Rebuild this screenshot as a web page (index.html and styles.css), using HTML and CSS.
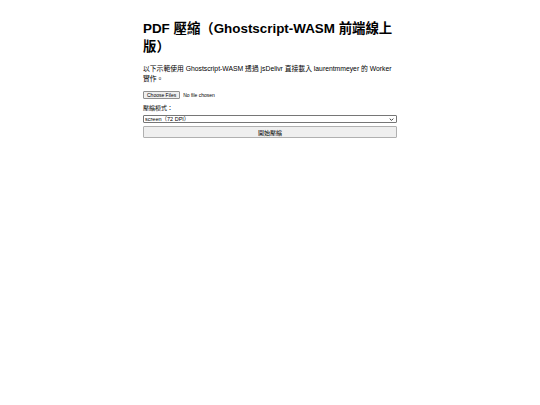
FILE: index.html
```html
<!DOCTYPE html>
<html lang="zh-Hant">
<head>
<meta charset="utf-8">
<title>PDF 壓縮</title>
<link rel="stylesheet" href="styles.css">
</head>
<body>
<main class="wrap">
  <h1 class="title">PDF 壓縮（Ghostscript-WASM 前端線上版）</h1>
  <p class="intro">以下示範使用 Ghostscript-WASM 透過 jsDelivr 直接載入 laurentmmeyer 的 Worker 實作。</p>
  <div class="file-row">
    <span class="file-btn">Choose Files</span>
    <span class="file-name">No file chosen</span>
  </div>
  <label class="label" for="mode">壓縮模式：</label>
  <div class="select-wrap">
    <select id="mode" class="select">
      <option>screen（72 DPI）</option>
      <option>ebook（150 DPI）</option>
      <option>printer（300 DPI）</option>
    </select>
    <svg class="chev" viewBox="0 0 8 5" width="5" height="3"><path d="M1 1 L4 4 L7 1" fill="none" stroke="#333" stroke-width="1.6"/></svg>
  </div>
  <button class="btn" type="button">開始壓縮</button>
</main>
</body>
</html>
```
FILE: styles.css
```css
html, body {
  margin: 0;
  padding: 0;
  background: #fff;
}
body {
  font-family: "Liberation Sans", Arial, "Noto Sans CJK TC", sans-serif;
  color: #000;
}
.wrap {
  width: 254px;
  margin: 0 auto;
  padding-top: 20px;
  display: flex;
  flex-direction: column;
}
.title {
  font-size: 13.4px;
  line-height: 18px;
  font-weight: bold;
  margin: 0 0 8px;
}
.intro {
  font-size: 6.8px;
  line-height: 10px;
  margin: 0 0 7px;
}
.file-row {
  display: flex;
  align-items: center;
  gap: 3px;
  margin-bottom: 5px;
  font-size: 5px;
}
.file-btn {
  display: inline-flex;
  align-items: center;
  height: 8px;
  padding: 0 3px;
  border: 1px solid #8f8f8f;
  border-radius: 1px;
  background: #efefef;
  box-sizing: border-box;
  color: #000;
}
.file-name {
  color: #000;
}
.label {
  font-size: 6px;
  line-height: 9px;
  margin-bottom: 2px;
}
.select-wrap {
  position: relative;
  margin-bottom: 3px;
}
.select {
  appearance: none;
  -webkit-appearance: none;
  display: block;
  width: 254px;
  font-size: 5.5px;
  height: 8px;
  line-height: 6px;
  padding: 0 1px;
  box-sizing: border-box;
  border: 1px solid #767676;
  border-radius: 1px;
  background: #fff;
  color: #000;
  font-family: "Liberation Sans", Arial, "Noto Sans CJK TC", sans-serif;
}
.chev {
  position: absolute;
  right: 3px;
  top: 2.5px;
}
.btn {
  width: 254px;
  height: 12px;
  font-size: 6px;
  padding: 0;
  border: 1px solid #b0b0b0;
  border-radius: 1px;
  background: #efefef;
  color: #000;
  font-family: "Liberation Sans", Arial, "Noto Sans CJK TC", sans-serif;
}
```
